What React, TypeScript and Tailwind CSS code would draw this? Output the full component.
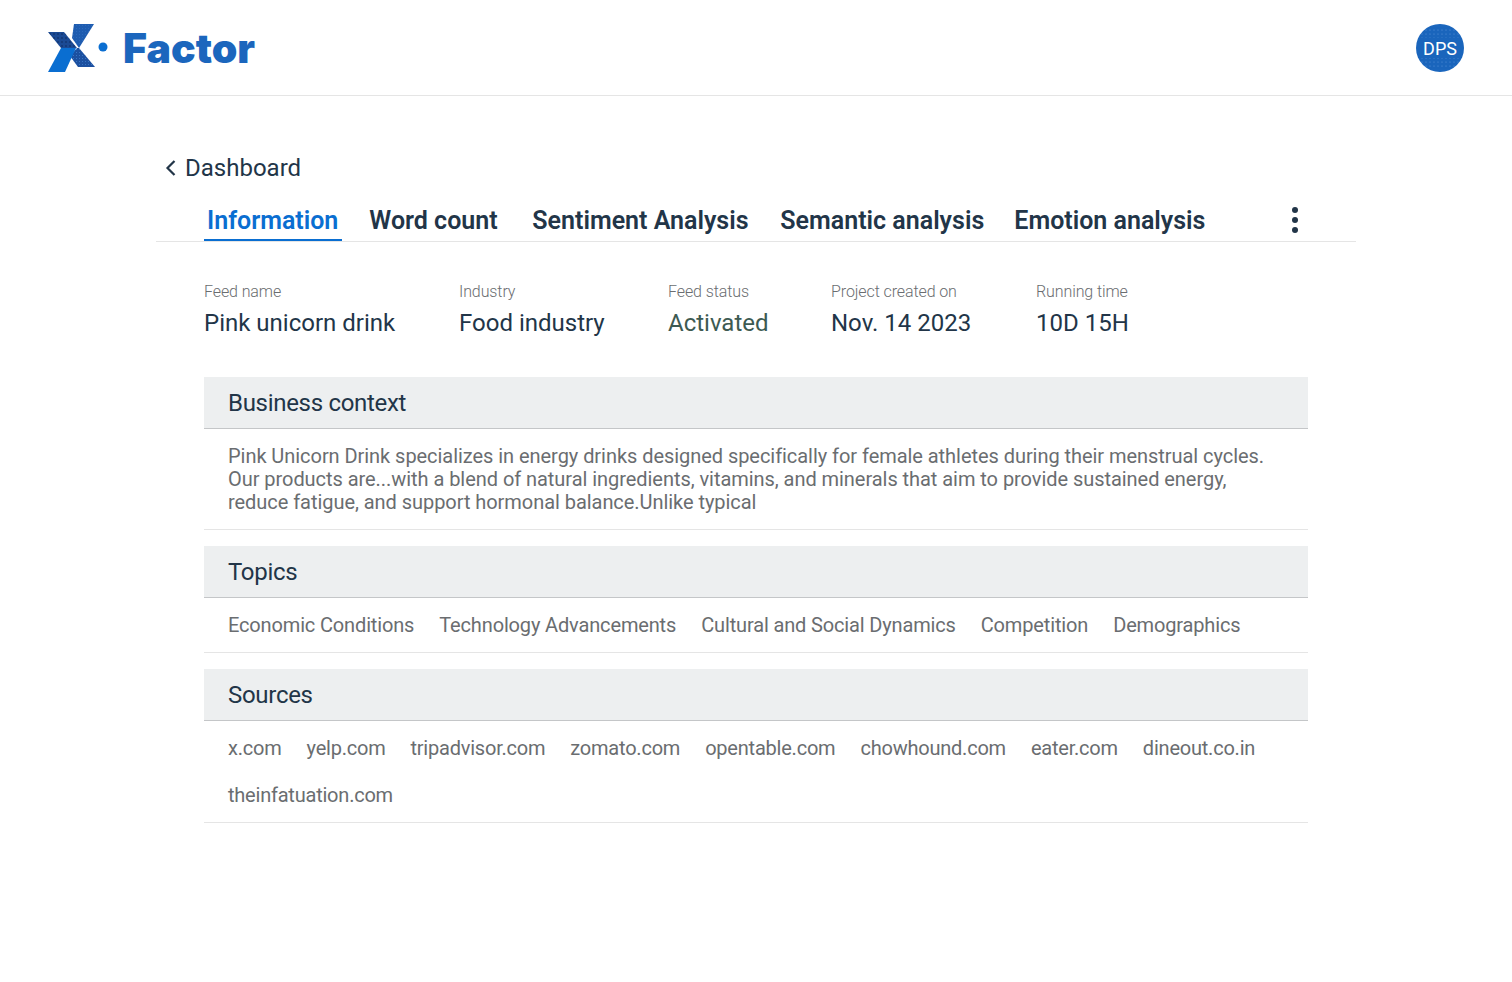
const sans = "font-['Roboto','Noto_Sans',sans-serif]";

const infoItems = [
  { label: "Feed name", value: "Pink unicorn drink", width: "w-[255px]" },
  { label: "Industry", value: "Food industry", width: "w-[209px]" },
  { label: "Feed status", value: "Activated", width: "w-[163px]" },
  { label: "Project created on", value: "Nov. 14 2023", width: "w-[205px]" },
  { label: "Running time", value: "10D 15H", width: "w-[120px]" },
];

const tabs = [
  { label: "Word count", width: "w-[163px]" },
  { label: "Sentiment Analysis", width: "w-[248px]" },
  { label: "Semantic analysis", width: "w-[234px]" },
  { label: "Emotion analysis", width: "w-[200px]" },
];
const topics = [
  "Economic Conditions",
  "Technology Advancements",
  "Cultural and Social Dynamics",
  "Competition",
  "Demographics",
];
const sources = [
  "x.com",
  "yelp.com",
  "tripadvisor.com",
  "zomato.com",
  "opentable.com",
  "chowhound.com",
  "eater.com",
  "dineout.co.in",
  "theinfatuation.com",
];

function Logo() {
  return (
    <div className="flex items-center">
      <svg width="60" height="48" viewBox="0 0 60 48">
        <defs>
          <pattern id="darkDots" width="4" height="4" patternUnits="userSpaceOnUse">
            <circle cx="2" cy="2" r="0.8" fill="#0d2a5c" />
          </pattern>
          <pattern id="lightDots" width="3" height="3" patternUnits="userSpaceOnUse">
            <circle cx="1.5" cy="1.5" r="0.5" fill="#3f7fcf" />
          </pattern>
        </defs>
        <path d="M26 0 H46 L31 24 L24 14 Z" fill="#1e5cb0" />
        <path d="M26 0 H46 L31 24 L24 14 Z" fill="url(#lightDots)" opacity="0.5" />
        <path d="M29 24 L31 24 L47 43 H30 L22 32 Z" fill="#1c50a0" />
        <path d="M29 24 L31 24 L47 43 H30 L22 32 Z" fill="url(#lightDots)" />
        <path d="M0 8 H16 L29 24 H13 Z" fill="#1b4a94" />
        <path d="M0 8 H16 L29 24 H13 Z" fill="url(#darkDots)" />
        <path d="M13 24 H28 L17 48 H0 Z" fill="#0a6ed1" />
        <circle cx="55" cy="23" r="4.5" fill="#0a6ed1" />
      </svg>
      <span className="ml-[15px] text-[41px] leading-[48px] font-black text-[#1b66bd] font-['Inter',sans-serif]">
        Factor
      </span>
    </div>
  );
}

function Avatar() {
  return (
    <div className="relative flex h-12 w-12 items-center justify-center overflow-hidden rounded-full bg-[#1b66bd] pt-[2px] text-lg text-white">
      <svg width="48" height="48" viewBox="0 0 48 48" className="absolute inset-0" opacity="0.7">
        <defs>
          <pattern id="avatarDots" width="4" height="4" patternUnits="userSpaceOnUse">
            <circle cx="2" cy="2" r="0.6" fill="#6ea3e2" />
          </pattern>
        </defs>
        <rect x="0" y="3" width="48" height="11" fill="url(#avatarDots)" />
        <rect x="0" y="34" width="48" height="11" fill="url(#avatarDots)" />
      </svg>
      <span className="relative">DPS</span>
    </div>
  );
}

function Section({ title, children }: { title: string; children: React.ReactNode }) {
  return (
    <section className="border-b border-[#e5e5e5]">
      <h2 className="flex h-[52px] items-center border-b border-[#c4c6c8] bg-[#edeff0] pl-6 text-2xl font-normal tracking-[-0.3px] text-[#223548]">
        {title}
      </h2>
      {children}
    </section>
  );
}

function Chips({ items, tight }: { items: string[]; tight?: boolean }) {
  return (
    <div className={`flex flex-wrap gap-x-[25px] gap-y-5 px-6 pt-[14px] pb-[13px] text-[20px] leading-[27px] text-[#6a6d70] ${tight ? "tracking-[-0.22px]" : "tracking-[-0.15px]"}`}>
      {items.map((item) => (
        <span key={item}>{item}</span>
      ))}
    </div>
  );
}

export default function App() {
  return (
    <div className={`min-h-[982px] bg-white ${sans}`}>
      <header className="flex h-[96px] items-center justify-between border-b border-[#e5e5e5] pr-12 pl-12">
        <Logo />
        <Avatar />
      </header>

      <main className="mx-auto w-[1200px] pt-[54px]">
        <a className="flex h-9 items-center pl-2 text-2xl text-[#223548]">
          <svg width="14" height="18" viewBox="0 0 14 18" fill="none" stroke="#223548" strokeWidth="2.2" className="mr-[7px]">
            <path d="M10.5 2 L3.5 9 L10.5 16" />
          </svg>
          Dashboard
        </a>

        <nav className="relative mt-[16px] flex h-[40px] items-start border-b border-[#e5e5e5] pl-[48px] text-[25px] leading-[38px] font-semibold text-[#223548]">
          <span className="mr-[27px] h-[39px] border-b-2 border-[#0a6ed1] pr-1 pl-[3px] text-[#0a6ed1]">
            Information
          </span>
          {tabs.map((tab) => (
            <span key={tab.label} className={`whitespace-nowrap ${tab.width}`}>{tab.label}</span>
          ))}
          <div className="absolute right-[58px] top-[5px] flex flex-col gap-[4px]">
            <span className="h-[6px] w-[6px] rounded-full bg-[#223548]" />
            <span className="h-[6px] w-[6px] rounded-full bg-[#223548]" />
            <span className="h-[6px] w-[6px] rounded-full bg-[#223548]" />
          </div>
        </nav>

        <div className="mx-12 mt-[38px] flex">
          {infoItems.map((item) => (
            <div key={item.label} className={item.width}>
              <div className="text-[16px] leading-[24px] font-light tracking-[-0.1px] text-[#6a6d70]">{item.label}</div>
              <div className={`mt-[3px] text-[24px] leading-[32px] ${item.label === "Feed status" ? "text-[#3d5a52]" : "text-[#223548]"}`}>
                {item.value}
              </div>
            </div>
          ))}
        </div>

        <div className="mx-12 mt-[38px] flex flex-col gap-4">
          <Section title="Business context">
            <p className="px-6 pt-[16px] pb-[15px] text-[20px] leading-[23px] tracking-[-0.05px] text-[#6a6d70]">
              Pink Unicorn Drink specializes in energy drinks designed specifically for female athletes during their menstrual cycles. Our products are...with a blend of natural ingredients, vitamins, and minerals that aim to provide sustained energy, reduce fatigue, and support hormonal balance.Unlike typical
            </p>
          </Section>
          <Section title="Topics">
            <Chips items={topics} />
          </Section>
          <Section title="Sources">
            <Chips items={sources} tight />
          </Section>
        </div>
      </main>
    </div>
  );
}
